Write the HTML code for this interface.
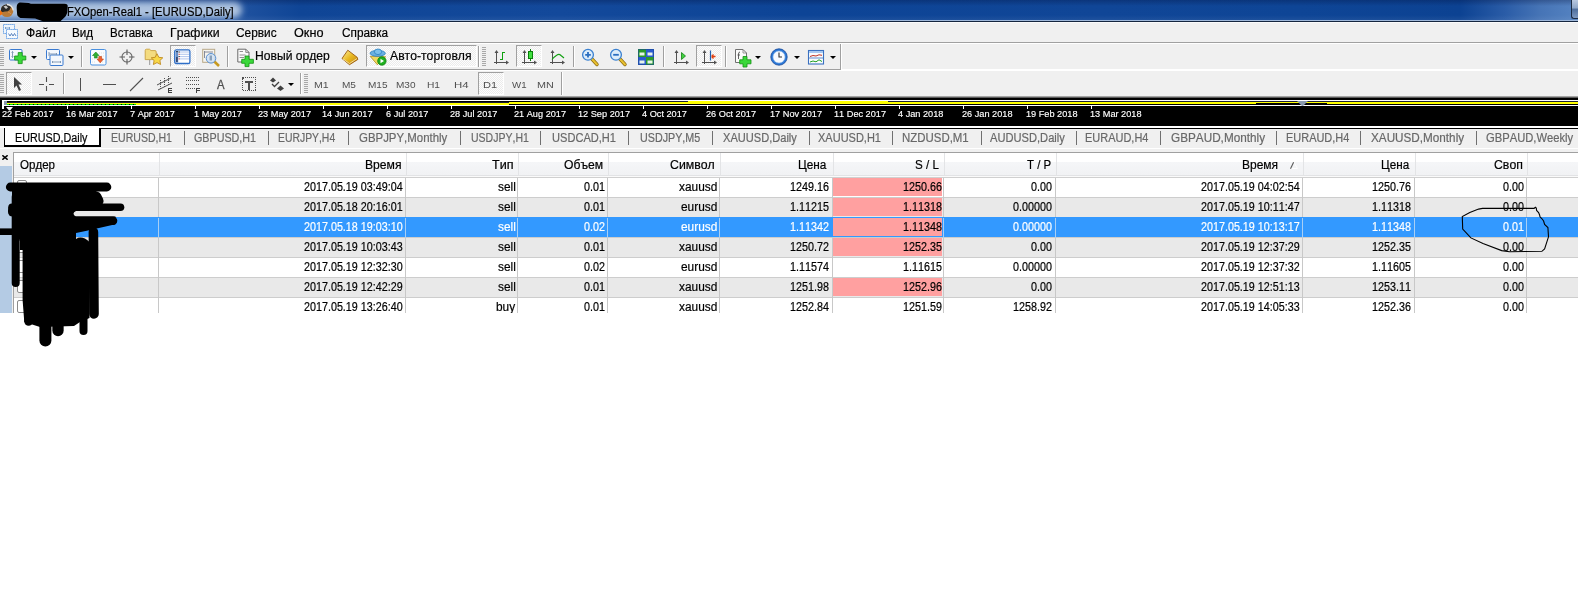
<!DOCTYPE html>
<html><head><meta charset="utf-8">
<style>
html,body{margin:0;padding:0;}
body{width:1578px;height:591px;overflow:hidden;position:relative;background:#fff;font-family:"Liberation Sans",sans-serif;}
body div, body svg{position:absolute;}
.t{white-space:nowrap;line-height:16px;transform-origin:0 0;font-kerning:none;-webkit-text-stroke:0.2px currentColor;}
</style></head><body>

<div style="left:0px;top:0px;width:1578px;height:20px;background:linear-gradient(to right,#3f6aae 0px,#2a5aa5 200px,#0f4596 300px,#13499b 560px,#0d4496 800px,#104697 1100px,#0e4596 1300px,#0c4292 1460px,#2a5ca7 1505px,#4674b6 1540px,#5280bf 1570px);"></div>
<div style="left:0px;top:0px;width:1578px;height:6px;background:linear-gradient(to bottom,rgba(0,10,50,0.28),rgba(0,10,50,0));"></div>
<div style="left:0px;top:15px;width:1578px;height:5px;background:linear-gradient(to bottom,rgba(255,255,255,0),rgba(255,255,255,0.06));"></div>
<div style="left:-10px;top:2px;width:252px;height:16px;background:#aec3df;border-radius:8px;filter:blur(3px);"></div>
<div style="left:0px;top:20px;width:1578px;height:1px;background:#9fb8da;"></div>
<div style="left:0px;top:21px;width:1578px;height:1px;background:#15263f;"></div>
<div style="left:1571px;top:0px;width:7px;height:18px;background:linear-gradient(to bottom,#b8c8e0,#8ea6c8 45%,#4e6e9c 50%,#7c98c0);border-left:1px solid #1c2c44;border-bottom:1px solid #1c2c44;border-bottom-left-radius:3px;"></div>
<svg style="left:0;top:0" width="15" height="20" viewBox="0 0 15 20"><circle cx="7" cy="10.8" r="6.3" fill="#b87a38"/><path d="M1 9 Q2 4.5 7 4.5 Q10 4.6 11 7 L9.5 10 Q7.5 12 5 11.5 Q3 12 1 12 Z" fill="#2a2a2a"/><path d="M3.5 6.5 L6 5.5 L8 7.5 L6 9 Z" fill="#c8c8c8"/><path d="M7 4.5 A6.3 6.3 0 0 1 13.2 10.5" fill="none" stroke="#e8e8e8" stroke-width="1.3"/><path d="M0 10 Q2 11 2.5 13.5 Q2 15 0 15.5 Z" fill="#f07010"/><path d="M8 12 Q10 12.5 11 14" stroke="#d89050" stroke-width="1" fill="none"/></svg>
<svg style="left:0;top:0" width="80" height="23" viewBox="0 0 80 23"><path d="M16.7 8.4 C 16.5 4, 18.5 2.5, 20.5 2.5 L 28.8 2.9 L 30.9 3.8 L 64.4 3.8 C 67 4, 68 5, 67.7 6.5 L 67.3 12.6 C 66.5 15.5, 65.5 16.5, 64.4 17.6 L 60.2 21.5 L 43.5 21.5 L 35.1 18.4 L 20.5 18 C 18 17, 17 15.5, 17.1 13.8 Z" fill="#000"/></svg>
<div class="t" style="left:66.58px;top:4px;font-size:12.5px;color:#000;transform:scaleX(0.8989);">FXOpen-Real1 - [EURUSD,Daily]</div>
<div style="left:0px;top:22px;width:1578px;height:20px;background:#f0f0f0;"></div>
<div style="left:0px;top:22px;width:1578px;height:1px;background:#fbfbfb;"></div>
<div style="left:0px;top:42px;width:1578px;height:1px;background:#a0a0a0;"></div>
<div style="left:0px;top:43px;width:1578px;height:1px;background:#ffffff;"></div>
<svg style="left:3px;top:24px" width="15" height="15" viewBox="0 0 15 15"><rect x="0.5" y="0.5" width="11" height="9" fill="#eef5fc" stroke="#4a8ee0" stroke-dasharray="1.2,0.8"/><rect x="3.5" y="5.5" width="11" height="9" fill="#f6fafe" stroke="#4a8ee0" stroke-dasharray="1.2,0.8"/><path d="M2 4 H7 M3 3 L2 4 L3 5 M6 3 L7 4 L6 5" stroke="#5a8ac0" fill="none" stroke-width="0.7"/><path d="M5.5 9.5 L7 12 L8.5 9.5 L10 12 L11.5 9.5 L13 12" stroke="#3a6ab0" fill="none" stroke-width="0.8"/></svg>
<div class="t" style="left:25.80px;top:25px;font-size:12.5px;color:#000;transform:scaleX(0.9676);">Файл</div>
<div class="t" style="left:72.34px;top:25px;font-size:12.5px;color:#000;transform:scaleX(0.9357);">Вид</div>
<div class="t" style="left:110.06px;top:25px;font-size:12.5px;color:#000;transform:scaleX(0.9205);">Вставка</div>
<div class="t" style="left:169.99px;top:25px;font-size:12.5px;color:#000;transform:scaleX(0.9835);">Графики</div>
<div class="t" style="left:236.40px;top:25px;font-size:12.5px;color:#000;transform:scaleX(0.9489);">Сервис</div>
<div class="t" style="left:294.40px;top:25px;font-size:12.5px;color:#000;transform:scaleX(1.0133);">Окно</div>
<div class="t" style="left:341.70px;top:25px;font-size:12.5px;color:#000;transform:scaleX(0.9434);">Справка</div>
<div style="left:0px;top:44px;width:1578px;height:25px;background:#f0f0f0;"></div>
<div style="left:0px;top:69px;width:841px;height:1px;background:#a0a0a0;"></div>
<div style="left:0px;top:70px;width:841px;height:1px;background:#ffffff;"></div>
<div style="left:0px;top:71px;width:1578px;height:25px;background:#f0f0f0;"></div>
<div style="left:0px;top:96px;width:1578px;height:2px;background:linear-gradient(to bottom,#c8c8c8,#383838);"></div>
<div style="left:0px;top:47px;width:4px;height:1px;background:#a8a8a8;"></div>
<div style="left:0px;top:49px;width:4px;height:1px;background:#a8a8a8;"></div>
<div style="left:0px;top:51px;width:4px;height:1px;background:#a8a8a8;"></div>
<div style="left:0px;top:53px;width:4px;height:1px;background:#a8a8a8;"></div>
<div style="left:0px;top:55px;width:4px;height:1px;background:#a8a8a8;"></div>
<div style="left:0px;top:57px;width:4px;height:1px;background:#a8a8a8;"></div>
<div style="left:0px;top:59px;width:4px;height:1px;background:#a8a8a8;"></div>
<div style="left:0px;top:61px;width:4px;height:1px;background:#a8a8a8;"></div>
<div style="left:0px;top:63px;width:4px;height:1px;background:#a8a8a8;"></div>
<div style="left:0px;top:65px;width:4px;height:1px;background:#a8a8a8;"></div>
<svg style="left:9px;top:48px" width="18" height="17" viewBox="0 0 18 17"><rect x="0.5" y="1.5" width="12.5" height="10.5" rx="1" fill="#f4f8fd" stroke="#3a7ad0"/><path d="M3.5 3.5 V9.5 M2.5 4.5 L3.5 3.5 L4.5 4.5 M2.5 8.5 L3.5 9.5 L4.5 8.5" stroke="#7a94b0" fill="none" stroke-width="0.9"/><path d="M9.2 4.6 H13.2 V8 H16.8 V12 H13.2 V15.6 H9.2 V12 H5.6 V8 H9.2 Z" fill="#3ad83a" stroke="#129012" stroke-width="0.8"/></svg>
<svg style="left:31px;top:56px" width="6" height="4" viewBox="0 0 6 4"><path d="M0 0 H6 L3 3 Z" fill="#000"/></svg>
<svg style="left:46px;top:48px" width="18" height="18" viewBox="0 0 18 18"><rect x="0.5" y="1.5" width="13" height="10" rx="1" fill="#f4f8fd" stroke="#3a7ad0"/><rect x="4" y="7" width="13" height="10.5" rx="1" fill="#f4f8fd" stroke="#3a7ad0"/><path d="M3 4 V8 M3 6 H11 M10 5 L11 6 L10 7 M6 14 H15 M7 13 L6 14 L7 15 M14 13 L15 14 L14 15" stroke="#7a94b0" fill="none" stroke-width="0.9"/></svg>
<svg style="left:68px;top:56px" width="6" height="4" viewBox="0 0 6 4"><path d="M0 0 H6 L3 3 Z" fill="#000"/></svg>
<div style="left:81px;top:46px;width:1px;height:21px;background:#a0a0a0;"></div>
<div style="left:82px;top:46px;width:1px;height:21px;background:#ffffff;"></div>
<svg style="left:90px;top:49px" width="17" height="17" viewBox="0 0 17 17"><rect x="0.5" y="0.5" width="15.5" height="15.5" rx="1.5" fill="#fafcfe" stroke="#4a90e0"/><path d="M9 4 H14 M9 7 H14 M2 10 H6 M2 13 H6 M10 13 H14" stroke="#d0d4d8" stroke-width="0.7" stroke-dasharray="1,1"/><path d="M2.5 6.5 L5.8 3 L9 6.5 H7.2 V9 H4.4 V6.5 Z" fill="#30b030" stroke="#1a801a" stroke-width="0.6"/><path d="M7 10 L10.2 13.8 L13.5 10 H11.6 V7.5 H8.8 V10 Z" fill="#f06030" stroke="#c04010" stroke-width="0.6"/></svg>
<svg style="left:119px;top:49px" width="17" height="17" viewBox="0 0 17 17"><circle cx="8" cy="8" r="5" fill="none" stroke="#6a6a6a" stroke-width="1.1"/><path d="M8 0.5 V6 M8 10 V15.5 M0.5 8 H6 M10 8 H15.5" stroke="#5a5a5a" stroke-width="1.1"/></svg>
<svg style="left:144px;top:48px" width="20" height="18" viewBox="0 0 20 18"><path d="M1.2 2.5 Q1.2 1.2 2.5 1.2 H5.5 L7 2.6 H11 Q12.2 2.6 12.2 3.8 V11.6 H1.2 Z" fill="#f4dc80" stroke="#c8a040" stroke-width="0.9"/><path d="M13 5.7 L14.8 9.3 L18.8 9.8 L15.9 12.5 L16.6 16.5 L13 14.6 L9.4 16.5 L10.1 12.5 L7.2 9.8 L11.2 9.3 Z" fill="#f8d848" stroke="#c08a20" stroke-width="0.9"/><path d="M5.7 12.5 V17" stroke="#404040" stroke-dasharray="1,1"/></svg>
<div style="left:170px;top:45px;width:26px;height:22px;background:conic-gradient(#fdfdfd 25%,#ebebeb 0 50%,#fdfdfd 0 75%,#ebebeb 0) 0 0/2px 2px;border-left:1px solid #a0a0a0;border-top:1px solid #a0a0a0;border-right:1px solid #fff;border-bottom:1px solid #fff;box-sizing:border-box;"></div>
<svg style="left:174px;top:49px" width="17" height="16" viewBox="0 0 17 16"><rect x="0.7" y="0.9" width="15.2" height="13.6" rx="1.6" fill="#fff" stroke="#2f6fc8" stroke-width="1.3"/><rect x="1.6" y="1.8" width="2.6" height="11.8" fill="#6a90c8"/><rect x="2.2" y="8" width="1.4" height="5" fill="#2a3a60"/><path d="M5.5 3 H15 M5.5 5.3 H15 M5.5 7.6 H15 M5.5 9.9 H15" stroke="#a8c0ec" stroke-width="0.9"/><path d="M2.4 2.6 h1.2 M4.6 3 h1.1 M4.6 7.6 h1.1" stroke="#000" stroke-width="1"/><path d="M4.6 5.3 h1.1 M4.6 9.9 h1.1" stroke="#e02020" stroke-width="1"/></svg>
<svg style="left:202px;top:48px" width="19" height="19" viewBox="0 0 19 19"><rect x="0.7" y="1.3" width="12" height="13" fill="#f6f4ee" stroke="#b8a888" stroke-width="1"/><path d="M2.5 3 V10 M2.5 4 H11" stroke="#7a8090" stroke-width="0.9"/><circle cx="9" cy="10.3" r="4.8" fill="#cfe0f4" fill-opacity="0.85" stroke="#5a90d0" stroke-width="1"/><rect x="7.6" y="7.5" width="2.4" height="5" fill="#8aa0b8"/><path d="M12.6 13.8 L17 18" stroke="#c89a20" stroke-width="2.6"/></svg>
<div style="left:227px;top:46px;width:1px;height:21px;background:#a0a0a0;"></div>
<div style="left:228px;top:46px;width:1px;height:21px;background:#ffffff;"></div>
<svg style="left:237px;top:48px" width="18" height="20" viewBox="0 0 18 20"><path d="M0.8 1.2 H8.8 L12 4.4 V14 H0.8 Z" fill="#fafafa" stroke="#6a6a6a" stroke-width="1"/><path d="M8.8 1.2 V4.4 H12" fill="none" stroke="#6a6a6a" stroke-width="0.8"/><path d="M2.6 3.5 H6 M2.6 7 H8.5 M2.6 9.5 H7" stroke="#909090" stroke-width="1"/><path d="M8 8 H12 V11.3 H16.4 V15.3 H12 V18.6 H8 V15.3 H4.7 V11.3 H8 Z" fill="#3ad83a" stroke="#129012" stroke-width="0.8"/></svg>
<div class="t" style="left:255.01px;top:48px;font-size:12.5px;color:#000;transform:scaleX(0.9694);">Новый ордер</div>
<svg style="left:340px;top:48px" width="20" height="19" viewBox="0 0 20 19"><defs><linearGradient id="bk" x1="0" y1="0" x2="1" y2="1"><stop offset="0" stop-color="#fff0a0"/><stop offset="0.5" stop-color="#e8b820"/><stop offset="1" stop-color="#c08010"/></linearGradient></defs><path d="M2 10.5 L7.8 2.2 L17 9.2 L17.9 11.4 L9.5 16.7 Z" fill="url(#bk)" stroke="#9a5a10" stroke-width="0.9" stroke-linejoin="round"/><path d="M3 11 L9.5 15.5 L17 10.5" fill="none" stroke="#f8e8b0" stroke-width="0.8"/></svg>
<div style="left:366px;top:45px;width:111px;height:22px;background:conic-gradient(#fdfdfd 25%,#ebebeb 0 50%,#fdfdfd 0 75%,#ebebeb 0) 0 0/2px 2px;border-left:1px solid #a0a0a0;border-top:1px solid #a0a0a0;border-right:1px solid #fff;border-bottom:1px solid #fff;box-sizing:border-box;"></div>
<svg style="left:369px;top:48px" width="19" height="19" viewBox="0 0 19 19"><path d="M1.2 8.3 L8.3 16.7 L16.7 8.8 Z" fill="#f0d860" stroke="#b08a20" stroke-width="0.8"/><ellipse cx="8.7" cy="5.3" rx="7.6" ry="3" fill="#6ab0e0" stroke="#2a80c0" stroke-width="0.8"/><ellipse cx="9" cy="3.8" rx="3.6" ry="2.8" fill="#7cc0ec" stroke="#2a80c0" stroke-width="0.8"/><circle cx="12.9" cy="13" r="4.2" fill="#20b020" stroke="#0a800a" stroke-width="0.8"/><path d="M11.5 10.7 L15 13 L11.5 15.3 Z" fill="#fff"/></svg>
<div class="t" style="left:389.98px;top:48px;font-size:12.5px;color:#000;transform:scaleX(0.9750);">Авто-торговля</div>
<div style="left:478px;top:46px;width:1px;height:21px;background:#a0a0a0;"></div>
<div style="left:479px;top:46px;width:1px;height:21px;background:#ffffff;"></div>
<div style="left:482px;top:47px;width:4px;height:1px;background:#a8a8a8;"></div>
<div style="left:482px;top:49px;width:4px;height:1px;background:#a8a8a8;"></div>
<div style="left:482px;top:51px;width:4px;height:1px;background:#a8a8a8;"></div>
<div style="left:482px;top:53px;width:4px;height:1px;background:#a8a8a8;"></div>
<div style="left:482px;top:55px;width:4px;height:1px;background:#a8a8a8;"></div>
<div style="left:482px;top:57px;width:4px;height:1px;background:#a8a8a8;"></div>
<div style="left:482px;top:59px;width:4px;height:1px;background:#a8a8a8;"></div>
<div style="left:482px;top:61px;width:4px;height:1px;background:#a8a8a8;"></div>
<div style="left:482px;top:63px;width:4px;height:1px;background:#a8a8a8;"></div>
<div style="left:482px;top:65px;width:4px;height:1px;background:#a8a8a8;"></div>
<svg style="left:493px;top:48px" width="20" height="19" viewBox="0 0 20 19"><path d="M3.5 3 V16 M1 14.5 H15" stroke="#505050" stroke-width="1" fill="none" shape-rendering="crispEdges"/><path d="M1.5 5 L3.5 2 L5.5 5 Z M13 12.5 L16 14.5 L13 16.5 Z" fill="#505050"/><path d="M9.5 4.5 V11.5 M9 4.5 H12 M7 11.5 H10" stroke="#10a010" stroke-width="1.1" fill="none" shape-rendering="crispEdges"/></svg>
<div style="left:516px;top:45px;width:26px;height:22px;background:conic-gradient(#fdfdfd 25%,#ebebeb 0 50%,#fdfdfd 0 75%,#ebebeb 0) 0 0/2px 2px;border-left:1px solid #a0a0a0;border-top:1px solid #a0a0a0;border-right:1px solid #fff;border-bottom:1px solid #fff;box-sizing:border-box;"></div>
<svg style="left:521px;top:48px" width="20" height="19" viewBox="0 0 20 19"><path d="M3.5 3 V16 M1 14.5 H15" stroke="#505050" stroke-width="1" fill="none" shape-rendering="crispEdges"/><path d="M1.5 5 L3.5 2 L5.5 5 Z M13 12.5 L16 14.5 L13 16.5 Z" fill="#505050"/><path d="M9.5 0.5 V13" stroke="#108010" stroke-width="1" shape-rendering="crispEdges"/><rect x="7.5" y="3.5" width="4" height="7" fill="#40e040" stroke="#0a800a" stroke-width="1"/></svg>
<svg style="left:549px;top:48px" width="20" height="19" viewBox="0 0 20 19"><path d="M3.5 3 V16 M1 14.5 H15" stroke="#505050" stroke-width="1" fill="none" shape-rendering="crispEdges"/><path d="M1.5 5 L3.5 2 L5.5 5 Z M13 12.5 L16 14.5 L13 16.5 Z" fill="#505050"/><path d="M3 11.5 Q5 9 8 7 Q10 5.5 12 7.5 L15 10" stroke="#10a010" stroke-width="1.1" fill="none"/></svg>
<div style="left:573px;top:46px;width:1px;height:21px;background:#a0a0a0;"></div>
<div style="left:574px;top:46px;width:1px;height:21px;background:#ffffff;"></div>
<svg style="left:581px;top:48px" width="20" height="19" viewBox="0 0 20 19"><path d="M10.5 10.5 L16 16.5" stroke="#8a6a10" stroke-width="3.4" stroke-linecap="round"/><path d="M10.5 10.5 L16 16.5" stroke="#e8c030" stroke-width="2" stroke-linecap="round"/><circle cx="7" cy="6.8" r="5.4" fill="#dcecfa" stroke="#3a80d0" stroke-width="1.3"/><path d="M4.2 6.8 H9.8 M7 4 V9.6" stroke="#2a6ec0" stroke-width="1.8"/></svg>
<svg style="left:609px;top:48px" width="20" height="19" viewBox="0 0 20 19"><path d="M10.5 10.5 L16 16.5" stroke="#8a6a10" stroke-width="3.4" stroke-linecap="round"/><path d="M10.5 10.5 L16 16.5" stroke="#e8c030" stroke-width="2" stroke-linecap="round"/><circle cx="7" cy="6.8" r="5.4" fill="#dcecfa" stroke="#3a80d0" stroke-width="1.3"/><path d="M4.2 6.8 H9.8" stroke="#2a6ec0" stroke-width="1.8"/></svg>
<svg style="left:638px;top:49px" width="17" height="17" viewBox="0 0 17 17"><rect x="0" y="0" width="8" height="8" fill="#2a9a2a"/><rect x="8" y="0" width="8" height="8" fill="#2a5ad0"/><rect x="0" y="8" width="8" height="8" fill="#2a5ad0"/><rect x="8" y="8" width="8" height="8" fill="#2a9a2a"/><path d="M1.5 3.5 H6.5 V6.5 H1.5 Z M9.5 3.5 H14.5 V6.5 H9.5 Z M1.5 11.5 H6.5 V14.5 H1.5 Z M9.5 11.5 H14.5 V14.5 H9.5 Z" fill="#e8f4e8" stroke="none"/><path d="M0.5 0.5 H15.5 V15.5 H0.5 Z" fill="none" stroke="#1a4a90" stroke-width="0.6"/></svg>
<div style="left:663px;top:46px;width:1px;height:21px;background:#a0a0a0;"></div>
<div style="left:664px;top:46px;width:1px;height:21px;background:#ffffff;"></div>
<svg style="left:672px;top:48px" width="20" height="19" viewBox="0 0 20 19"><path d="M4.5 3 V16 M2 14.5 H16" stroke="#505050" stroke-width="1" fill="none" shape-rendering="crispEdges"/><path d="M2.5 5 L4.5 2 L6.5 5 Z M14 12.5 L17 14.5 L14 16.5 Z" fill="#505050"/><path d="M9.5 4.5 L13.5 8 L9.5 11.5 Z" fill="#40d040" stroke="#108010" stroke-width="0.8"/></svg>
<div style="left:696px;top:45px;width:26px;height:22px;background:conic-gradient(#fdfdfd 25%,#ebebeb 0 50%,#fdfdfd 0 75%,#ebebeb 0) 0 0/2px 2px;border-left:1px solid #a0a0a0;border-top:1px solid #a0a0a0;border-right:1px solid #fff;border-bottom:1px solid #fff;box-sizing:border-box;"></div>
<svg style="left:700px;top:48px" width="20" height="19" viewBox="0 0 20 19"><path d="M4.5 3 V16 M2 14.5 H16" stroke="#505050" stroke-width="1" fill="none" shape-rendering="crispEdges"/><path d="M2.5 5 L4.5 2 L6.5 5 Z M14 12.5 L17 14.5 L14 16.5 Z" fill="#505050"/><path d="M10.5 2.5 V12.5" stroke="#2060b0" stroke-width="1.2"/><path d="M11.5 8.5 H15.5 M11.5 8.5 L13.5 6.5 M11.5 8.5 L13.5 10.5" stroke="#e04010" stroke-width="1.3" fill="none"/></svg>
<div style="left:725px;top:46px;width:1px;height:21px;background:#a0a0a0;"></div>
<div style="left:726px;top:46px;width:1px;height:21px;background:#ffffff;"></div>
<svg style="left:734px;top:48px" width="18" height="20" viewBox="0 0 18 20"><path d="M1.5 1.5 H9 L12.5 5 V14.5 H1.5 Z" fill="#fbfbfb" stroke="#707070" stroke-width="1"/><path d="M9 1.5 V5 H12.5" fill="none" stroke="#808080" stroke-width="0.8"/><path d="M6 4 Q4.5 4 4.5 6 V11 M3.5 7 H6" stroke="#505050" fill="none" stroke-width="0.9"/><path d="M9 8.5 H13 V11.8 H17 V15.8 H13 V19 H9 V15.8 H5.7 V11.8 H9 Z" fill="#3ad83a" stroke="#129012" stroke-width="0.8"/></svg>
<svg style="left:755px;top:56px" width="6" height="4" viewBox="0 0 6 4"><path d="M0 0 H6 L3 3 Z" fill="#000"/></svg>
<svg style="left:770px;top:48px" width="18" height="18" viewBox="0 0 18 18"><circle cx="9" cy="9" r="8.2" fill="#2a78d8" stroke="#1a4a98" stroke-width="0.8"/><circle cx="9" cy="9" r="6" fill="#f8fbff" stroke="#9ac0ea" stroke-width="0.6"/><path d="M9 4.5 V9 H12" stroke="#303030" stroke-width="1.1" fill="none"/></svg>
<svg style="left:794px;top:56px" width="6" height="4" viewBox="0 0 6 4"><path d="M0 0 H6 L3 3 Z" fill="#000"/></svg>
<svg style="left:807px;top:49px" width="18" height="17" viewBox="0 0 18 17"><rect x="1.5" y="1.5" width="15" height="13.5" fill="#fafcfe" stroke="#3a70c0" stroke-width="1.1"/><rect x="2" y="2" width="14" height="2" fill="#a8c8f0"/><path d="M2 9 H16" stroke="#3a70c0" stroke-width="0.8"/><path d="M3 7.5 L6 6.5 L9 7 L12 5.8 L15 6.3" stroke="#c03020" fill="none" stroke-width="1"/><path d="M3 13 L6 12 L9 12.8 L12 10.8 L15 12.5" stroke="#20a020" fill="none" stroke-width="1"/></svg>
<svg style="left:830px;top:56px" width="6" height="4" viewBox="0 0 6 4"><path d="M0 0 H6 L3 3 Z" fill="#000"/></svg>
<div style="left:840px;top:44px;width:1px;height:26px;background:#a0a0a0;"></div>
<div style="left:841px;top:44px;width:1px;height:27px;background:#ffffff;"></div>
<div style="left:0px;top:74px;width:4px;height:1px;background:#a8a8a8;"></div>
<div style="left:0px;top:76px;width:4px;height:1px;background:#a8a8a8;"></div>
<div style="left:0px;top:78px;width:4px;height:1px;background:#a8a8a8;"></div>
<div style="left:0px;top:80px;width:4px;height:1px;background:#a8a8a8;"></div>
<div style="left:0px;top:82px;width:4px;height:1px;background:#a8a8a8;"></div>
<div style="left:0px;top:84px;width:4px;height:1px;background:#a8a8a8;"></div>
<div style="left:0px;top:86px;width:4px;height:1px;background:#a8a8a8;"></div>
<div style="left:0px;top:88px;width:4px;height:1px;background:#a8a8a8;"></div>
<div style="left:0px;top:90px;width:4px;height:1px;background:#a8a8a8;"></div>
<div style="left:0px;top:92px;width:4px;height:1px;background:#a8a8a8;"></div>
<div style="left:6px;top:72px;width:26px;height:23px;background:conic-gradient(#fdfdfd 25%,#ebebeb 0 50%,#fdfdfd 0 75%,#ebebeb 0) 0 0/2px 2px;border-left:1px solid #a0a0a0;border-top:1px solid #a0a0a0;border-right:1px solid #fff;border-bottom:1px solid #fff;box-sizing:border-box;"></div>
<svg style="left:13px;top:77px" width="12" height="15" viewBox="0 0 12 15"><path d="M1 0 V11 L3.5 8.5 L6 14 L8 13 L5.5 7.5 L9 7.5 Z" fill="#404040"/></svg>
<svg style="left:38px;top:76px" width="17" height="16" viewBox="0 0 17 16"><path d="M8.5 1 V6 M8.5 10 V15 M1 8.5 H6 M11 8.5 H16" stroke="#505050" stroke-width="1.1"/></svg>
<div style="left:63px;top:73px;width:1px;height:21px;background:#a0a0a0;"></div>
<div style="left:64px;top:73px;width:1px;height:21px;background:#ffffff;"></div>
<div style="left:80px;top:78px;width:1px;height:13px;background:#505050;"></div>
<div style="left:103px;top:84px;width:13px;height:1px;background:#505050;"></div>
<svg style="left:129px;top:77px" width="15" height="15" viewBox="0 0 15 15"><path d="M1 14 L14 1" stroke="#505050" stroke-width="1.1"/></svg>
<svg style="left:156px;top:75px" width="18" height="19" viewBox="0 0 18 19" shape-rendering="crispEdges"><path d="M1 10 L15 3 M2 15 L16 8" stroke="#505050" stroke-width="1" fill="none" shape-rendering="auto"/><path d="M4.5 5 V14 M8.5 3 V12 M12.5 1 V10" stroke="#505050" stroke-width="1" stroke-dasharray="1,1"/><path d="M12 13 H16 V14 H13 V15 H15.5 V16 H13 V17 H16 V18 H12 Z" fill="#404040"/></svg>
<svg style="left:186px;top:76px" width="16" height="18" viewBox="0 0 16 18" shape-rendering="crispEdges"><path d="M0 1.5 H14 M0 4.5 H14 M0 8.5 H14 M0 12.5 H9" stroke="#505050" stroke-dasharray="1,1"/><path d="M10 12 H14 V13 H11 V14 H13.5 V15 H11 V17 H10 Z" fill="#404040"/></svg>
<div class="t" style="left:216.98px;top:77px;font-size:12.5px;color:#505050;transform:scaleX(0.9049);-webkit-text-stroke:0.3px #505050;">A</div>
<svg style="left:242px;top:77px" width="15" height="15" viewBox="0 0 15 15" shape-rendering="crispEdges"><rect x="0.5" y="0.5" width="13" height="13" fill="none" stroke="#505050" stroke-dasharray="1,1"/><rect x="0" y="0" width="2" height="2" fill="#505050"/><path d="M2.5 4.5 H11 M6.5 4 V13" stroke="#505050" stroke-width="2"/></svg>
<svg style="left:270px;top:77px" width="16" height="15" viewBox="0 0 16 15"><path d="M3 0.5 L6 3.5 L3 5.5 L0 3.5 Z" fill="#404040"/><path d="M2 7 L4.5 9.5 L9 5" stroke="#404040" stroke-width="1.3" fill="none"/><path d="M10.5 8.5 L14 11.5 L10.5 14 L7 11.5 Z" fill="#404040"/></svg>
<svg style="left:288px;top:83px" width="6" height="4" viewBox="0 0 6 4"><path d="M0 0 H6 L3 3 Z" fill="#000"/></svg>
<div style="left:300px;top:73px;width:1px;height:21px;background:#a0a0a0;"></div>
<div style="left:301px;top:73px;width:1px;height:21px;background:#ffffff;"></div>
<div style="left:304px;top:74px;width:4px;height:1px;background:#a8a8a8;"></div>
<div style="left:304px;top:76px;width:4px;height:1px;background:#a8a8a8;"></div>
<div style="left:304px;top:78px;width:4px;height:1px;background:#a8a8a8;"></div>
<div style="left:304px;top:80px;width:4px;height:1px;background:#a8a8a8;"></div>
<div style="left:304px;top:82px;width:4px;height:1px;background:#a8a8a8;"></div>
<div style="left:304px;top:84px;width:4px;height:1px;background:#a8a8a8;"></div>
<div style="left:304px;top:86px;width:4px;height:1px;background:#a8a8a8;"></div>
<div style="left:304px;top:88px;width:4px;height:1px;background:#a8a8a8;"></div>
<div style="left:304px;top:90px;width:4px;height:1px;background:#a8a8a8;"></div>
<div style="left:304px;top:92px;width:4px;height:1px;background:#a8a8a8;"></div>
<div style="left:478px;top:72px;width:26px;height:23px;background:conic-gradient(#fdfdfd 25%,#ebebeb 0 50%,#fdfdfd 0 75%,#ebebeb 0) 0 0/2px 2px;border-left:1px solid #a0a0a0;border-top:1px solid #a0a0a0;border-right:1px solid #fff;border-bottom:1px solid #fff;box-sizing:border-box;"></div>
<div class="t" style="left:314.13px;top:77px;font-size:9.5px;color:#505050;transform:scaleX(1.1126);-webkit-text-stroke:0;">M1</div>
<div class="t" style="left:342.48px;top:77px;font-size:9.5px;color:#505050;transform:scaleX(1.0567);-webkit-text-stroke:0;">M5</div>
<div class="t" style="left:368.18px;top:77px;font-size:9.5px;color:#505050;transform:scaleX(1.0577);-webkit-text-stroke:0;">M15</div>
<div class="t" style="left:395.88px;top:77px;font-size:9.5px;color:#505050;transform:scaleX(1.0560);-webkit-text-stroke:0;">M30</div>
<div class="t" style="left:427.46px;top:77px;font-size:9.5px;color:#505050;transform:scaleX(1.0733);-webkit-text-stroke:0;">H1</div>
<div class="t" style="left:454.07px;top:77px;font-size:9.5px;color:#505050;transform:scaleX(1.1997);-webkit-text-stroke:0;">H4</div>
<div class="t" style="left:483.09px;top:77px;font-size:9.5px;color:#505050;transform:scaleX(1.1650);-webkit-text-stroke:0;">D1</div>
<div class="t" style="left:511.96px;top:77px;font-size:9.5px;color:#505050;transform:scaleX(1.0186);-webkit-text-stroke:0;">W1</div>
<div class="t" style="left:537.12px;top:77px;font-size:9.5px;color:#505050;transform:scaleX(1.1346);-webkit-text-stroke:0;">MN</div>
<div style="left:561px;top:72px;width:1px;height:23px;background:#a0a0a0;"></div>
<div style="left:562px;top:72px;width:1px;height:23px;background:#ffffff;"></div>
<div style="left:0px;top:98px;width:1578px;height:28px;background:#000;"></div>
<div style="left:2px;top:100px;width:1576px;height:1px;background:#fff;"></div>
<div style="left:2px;top:105px;width:1576px;height:1px;background:#fff;"></div>
<div style="left:2px;top:100px;width:2px;height:9px;background:#fff;"></div>
<div style="left:4px;top:101px;width:3px;height:4px;background:#8899aa;"></div>
<div style="left:7px;top:102px;width:502px;height:1px;background:#1e2038;"></div>
<div style="left:7px;top:103px;width:502px;height:2px;background:#ffff00;"></div>
<div style="left:7px;top:104px;width:129px;height:1px;background:#00e000;"></div>
<div style="left:9px;top:104px;width:127px;height:1px;background:repeating-linear-gradient(to right,#000 0 1px,transparent 1px 4px);"></div>
<div style="left:530px;top:101px;width:1048px;height:1px;background:#1e2038;"></div>
<div style="left:509px;top:102px;width:1069px;height:2px;background:#ffff00;"></div>
<div style="left:688px;top:101px;width:200px;height:1px;background:#ffff00;"></div>
<div style="left:1256px;top:103px;width:71px;height:1px;background:#000;"></div>
<svg style="left:1297px;top:101px" width="11" height="6" viewBox="0 0 11 6"><path d="M0 0 H11 L6 5 H5 Z" fill="#8a9ab0"/></svg>
<svg style="left:6px;top:107px" width="7" height="4" viewBox="0 0 7 4"><path d="M0 0 H7 L4 3.5 H3 Z" fill="#fff"/></svg>
<div class="t" style="left:2.24px;top:106px;font-size:9.5px;color:#fff;transform:scaleX(0.9658);-webkit-text-stroke:0.15px #fff;">22 Feb 2017</div>
<div style="left:67px;top:106px;width:1px;height:3px;background:#fff;"></div>
<div class="t" style="left:66.00px;top:106px;font-size:9.5px;color:#fff;transform:scaleX(0.9658);-webkit-text-stroke:0.15px #fff;">16 Mar 2017</div>
<div style="left:131px;top:106px;width:1px;height:3px;background:#fff;"></div>
<div class="t" style="left:130.23px;top:106px;font-size:9.5px;color:#fff;transform:scaleX(0.9658);-webkit-text-stroke:0.15px #fff;">7 Apr 2017</div>
<div style="left:195px;top:106px;width:1px;height:3px;background:#fff;"></div>
<div class="t" style="left:194.00px;top:106px;font-size:9.5px;color:#fff;transform:scaleX(0.9658);-webkit-text-stroke:0.15px #fff;">1 May 2017</div>
<div style="left:259px;top:106px;width:1px;height:3px;background:#fff;"></div>
<div class="t" style="left:258.24px;top:106px;font-size:9.5px;color:#fff;transform:scaleX(0.9658);-webkit-text-stroke:0.15px #fff;">23 May 2017</div>
<div style="left:323px;top:106px;width:1px;height:3px;background:#fff;"></div>
<div class="t" style="left:322.00px;top:106px;font-size:9.5px;color:#fff;transform:scaleX(0.9658);-webkit-text-stroke:0.15px #fff;">14 Jun 2017</div>
<div style="left:387px;top:106px;width:1px;height:3px;background:#fff;"></div>
<div class="t" style="left:386.23px;top:106px;font-size:9.5px;color:#fff;transform:scaleX(0.9658);-webkit-text-stroke:0.15px #fff;">6 Jul 2017</div>
<div style="left:451px;top:106px;width:1px;height:3px;background:#fff;"></div>
<div class="t" style="left:450.24px;top:106px;font-size:9.5px;color:#fff;transform:scaleX(0.9658);-webkit-text-stroke:0.15px #fff;">28 Jul 2017</div>
<div style="left:515px;top:106px;width:1px;height:3px;background:#fff;"></div>
<div class="t" style="left:514.24px;top:106px;font-size:9.5px;color:#fff;transform:scaleX(0.9658);-webkit-text-stroke:0.15px #fff;">21 Aug 2017</div>
<div style="left:579px;top:106px;width:1px;height:3px;background:#fff;"></div>
<div class="t" style="left:578.00px;top:106px;font-size:9.5px;color:#fff;transform:scaleX(0.9658);-webkit-text-stroke:0.15px #fff;">12 Sep 2017</div>
<div style="left:643px;top:106px;width:1px;height:3px;background:#fff;"></div>
<div class="t" style="left:642.49px;top:106px;font-size:9.5px;color:#fff;transform:scaleX(0.9658);-webkit-text-stroke:0.15px #fff;">4 Oct 2017</div>
<div style="left:707px;top:106px;width:1px;height:3px;background:#fff;"></div>
<div class="t" style="left:706.24px;top:106px;font-size:9.5px;color:#fff;transform:scaleX(0.9658);-webkit-text-stroke:0.15px #fff;">26 Oct 2017</div>
<div style="left:771px;top:106px;width:1px;height:3px;background:#fff;"></div>
<div class="t" style="left:770.00px;top:106px;font-size:9.5px;color:#fff;transform:scaleX(0.9658);-webkit-text-stroke:0.15px #fff;">17 Nov 2017</div>
<div style="left:835px;top:106px;width:1px;height:3px;background:#fff;"></div>
<div class="t" style="left:834.00px;top:106px;font-size:9.5px;color:#fff;transform:scaleX(0.9658);-webkit-text-stroke:0.15px #fff;">11 Dec 2017</div>
<div style="left:899px;top:106px;width:1px;height:3px;background:#fff;"></div>
<div class="t" style="left:898.49px;top:106px;font-size:9.5px;color:#fff;transform:scaleX(0.9658);-webkit-text-stroke:0.15px #fff;">4 Jan 2018</div>
<div style="left:963px;top:106px;width:1px;height:3px;background:#fff;"></div>
<div class="t" style="left:962.24px;top:106px;font-size:9.5px;color:#fff;transform:scaleX(0.9658);-webkit-text-stroke:0.15px #fff;">26 Jan 2018</div>
<div style="left:1027px;top:106px;width:1px;height:3px;background:#fff;"></div>
<div class="t" style="left:1026.00px;top:106px;font-size:9.5px;color:#fff;transform:scaleX(0.9658);-webkit-text-stroke:0.15px #fff;">19 Feb 2018</div>
<div style="left:1091px;top:106px;width:1px;height:3px;background:#fff;"></div>
<div class="t" style="left:1090.00px;top:106px;font-size:9.5px;color:#fff;transform:scaleX(0.9658);-webkit-text-stroke:0.15px #fff;">13 Mar 2018</div>
<div style="left:0px;top:126px;width:1578px;height:22px;background:#f0f0f0;"></div>
<div style="left:0px;top:126px;width:1578px;height:2px;background:#fff;"></div>
<div style="left:4px;top:128px;width:1574px;height:1px;background:#000;"></div>
<div style="left:0px;top:148px;width:1578px;height:1px;background:#fff;"></div>
<div style="left:4px;top:128px;width:97px;height:19px;background:#fff;border-left:1px solid #000;border-right:2px solid #000;border-bottom:2px solid #000;box-sizing:border-box;"></div>
<div class="t" style="left:15.42px;top:130px;font-size:12.5px;color:#000;transform:scaleX(0.8616);">EURUSD,Daily</div>
<div class="t" style="left:110.53px;top:130px;font-size:12.5px;color:#686868;transform:scaleX(0.8442);">EURUSD,H1</div>
<div class="t" style="left:194.46px;top:130px;font-size:12.5px;color:#686868;transform:scaleX(0.8591);">GBPUSD,H1</div>
<div class="t" style="left:278.15px;top:130px;font-size:12.5px;color:#686868;transform:scaleX(0.8311);">EURJPY,H4</div>
<div class="t" style="left:359.43px;top:130px;font-size:12.5px;color:#686868;transform:scaleX(0.9144);">GBPJPY,Monthly</div>
<div class="t" style="left:470.59px;top:130px;font-size:12.5px;color:#686868;transform:scaleX(0.8409);">USDJPY,H1</div>
<div class="t" style="left:551.65px;top:130px;font-size:12.5px;color:#686868;transform:scaleX(0.8859);">USDCAD,H1</div>
<div class="t" style="left:639.67px;top:130px;font-size:12.5px;color:#686868;transform:scaleX(0.8592);">USDJPY,M5</div>
<div class="t" style="left:722.75px;top:130px;font-size:12.5px;color:#686868;transform:scaleX(0.8863);">XAUUSD,Daily</div>
<div class="t" style="left:817.85px;top:130px;font-size:12.5px;color:#686868;transform:scaleX(0.8803);">XAUUSD,H1</div>
<div class="t" style="left:902.06px;top:130px;font-size:12.5px;color:#686868;transform:scaleX(0.9147);">NZDUSD,M1</div>
<div class="t" style="left:989.98px;top:130px;font-size:12.5px;color:#686868;transform:scaleX(0.8906);">AUDUSD,Daily</div>
<div class="t" style="left:1085.10px;top:130px;font-size:12.5px;color:#686868;transform:scaleX(0.8780);">EURAUD,H4</div>
<div class="t" style="left:1170.81px;top:130px;font-size:12.5px;color:#686868;transform:scaleX(0.9399);">GBPAUD,Monthly</div>
<div class="t" style="left:1285.50px;top:130px;font-size:12.5px;color:#686868;transform:scaleX(0.8766);">EURAUD,H4</div>
<div class="t" style="left:1370.74px;top:130px;font-size:12.5px;color:#686868;transform:scaleX(0.9371);">XAUUSD,Monthly</div>
<div class="t" style="left:1485.74px;top:130px;font-size:12.5px;color:#686868;transform:scaleX(0.8966);">GBPAUD,Weekly</div>
<div style="left:184px;top:131px;width:1px;height:14px;background:#707070;"></div>
<div style="left:268px;top:131px;width:1px;height:14px;background:#707070;"></div>
<div style="left:348px;top:131px;width:1px;height:14px;background:#707070;"></div>
<div style="left:460px;top:131px;width:1px;height:14px;background:#707070;"></div>
<div style="left:540px;top:131px;width:1px;height:14px;background:#707070;"></div>
<div style="left:628px;top:131px;width:1px;height:14px;background:#707070;"></div>
<div style="left:712px;top:131px;width:1px;height:14px;background:#707070;"></div>
<div style="left:809px;top:131px;width:1px;height:14px;background:#707070;"></div>
<div style="left:892px;top:131px;width:1px;height:14px;background:#707070;"></div>
<div style="left:981px;top:131px;width:1px;height:14px;background:#707070;"></div>
<div style="left:1076px;top:131px;width:1px;height:14px;background:#707070;"></div>
<div style="left:1160px;top:131px;width:1px;height:14px;background:#707070;"></div>
<div style="left:1276px;top:131px;width:1px;height:14px;background:#707070;"></div>
<div style="left:1360px;top:131px;width:1px;height:14px;background:#707070;"></div>
<div style="left:1476px;top:131px;width:1px;height:14px;background:#707070;"></div>
<div style="left:0px;top:149px;width:1578px;height:164px;background:#f0f0f0;"></div>
<div style="left:0px;top:166px;width:12px;height:147px;background:#b4cbe4;"></div>
<svg style="left:2px;top:155px" width="6" height="5" viewBox="0 0 6 5"><path d="M0.3 0.3 L5.7 4.7 M5.7 0.3 L0.3 4.7" stroke="#000" stroke-width="1.5"/></svg>
<div style="left:13px;top:152px;width:1565px;height:161px;background:#fff;"></div>
<div style="left:13px;top:152px;width:1565px;height:1px;background:#a0a0a0;"></div>
<div style="left:13px;top:152px;width:1px;height:161px;background:#a0a0a0;"></div>
<div style="left:14px;top:153px;width:1564px;height:9px;background:#ffffff;"></div>
<div style="left:14px;top:162px;width:1564px;height:13px;background:linear-gradient(to bottom,#f5f6f8,#f1f2f4);"></div>
<div style="left:14px;top:175px;width:1564px;height:1px;background:#e2e3e5;"></div>
<div style="left:14px;top:176px;width:1564px;height:1px;background:#fafafa;"></div>
<div style="left:14px;top:177px;width:1564px;height:1px;background:#d0d0d0;"></div>
<div style="left:159px;top:153px;width:1px;height:22px;background:#e3e4e6;"></div>
<div style="left:406px;top:153px;width:1px;height:22px;background:#e3e4e6;"></div>
<div style="left:518px;top:153px;width:1px;height:22px;background:#e3e4e6;"></div>
<div style="left:608px;top:153px;width:1px;height:22px;background:#e3e4e6;"></div>
<div style="left:720px;top:153px;width:1px;height:22px;background:#e3e4e6;"></div>
<div style="left:833px;top:153px;width:1px;height:22px;background:#e3e4e6;"></div>
<div style="left:944px;top:153px;width:1px;height:22px;background:#e3e4e6;"></div>
<div style="left:1056px;top:153px;width:1px;height:22px;background:#e3e4e6;"></div>
<div style="left:1303px;top:153px;width:1px;height:22px;background:#e3e4e6;"></div>
<div style="left:1415px;top:153px;width:1px;height:22px;background:#e3e4e6;"></div>
<div style="left:1527px;top:153px;width:1px;height:22px;background:#e3e4e6;"></div>
<div class="t" style="left:20.05px;top:157px;font-size:12.5px;color:#000;transform:scaleX(0.9250);">Ордер</div>
<div class="t" style="left:365.00px;top:157px;font-size:12.5px;color:#000;transform:scaleX(0.9717);">Время</div>
<div class="t" style="left:492.02px;top:157px;font-size:12.5px;color:#000;transform:scaleX(1.0079);">Тип</div>
<div class="t" style="left:564.42px;top:157px;font-size:12.5px;color:#000;transform:scaleX(0.9720);">Объем</div>
<div class="t" style="left:670.38px;top:157px;font-size:12.5px;color:#000;transform:scaleX(0.9844);">Символ</div>
<div class="t" style="left:798.33px;top:157px;font-size:12.5px;color:#000;transform:scaleX(0.9439);">Цена</div>
<div class="t" style="left:915.17px;top:157px;font-size:12.5px;color:#000;transform:scaleX(0.9302);">S / L</div>
<div class="t" style="left:1026.94px;top:157px;font-size:12.5px;color:#000;transform:scaleX(0.9155);">T / P</div>
<div class="t" style="left:1242.22px;top:157px;font-size:12.5px;color:#000;transform:scaleX(0.9605);">Время</div>
<div class="t" style="left:1381.44px;top:157px;font-size:12.5px;color:#000;transform:scaleX(0.9370);">Цена</div>
<div class="t" style="left:1493.58px;top:157px;font-size:12.5px;color:#000;transform:scaleX(0.9825);">Своп</div>
<svg style="left:1289px;top:161px" width="10" height="9" viewBox="0 0 10 9"><path d="M4.8 1 L8.5 7.5 H1.5" fill="none" stroke="#ffffff" stroke-width="1"/><path d="M1.5 7.8 L4.6 1.2" fill="none" stroke="#5a5a5a" stroke-width="1.1"/></svg>
<div style="left:14px;top:178px;width:1564px;height:19px;background:#ffffff;"></div>
<div style="left:14px;top:197px;width:1564px;height:1px;background:#cdcdcd;"></div>
<div style="left:158px;top:178px;width:1px;height:20px;background:#c8c8c8;"></div>
<div style="left:405px;top:178px;width:1px;height:20px;background:#c8c8c8;"></div>
<div style="left:517px;top:178px;width:1px;height:20px;background:#c8c8c8;"></div>
<div style="left:607px;top:178px;width:1px;height:20px;background:#c8c8c8;"></div>
<div style="left:719px;top:178px;width:1px;height:20px;background:#c8c8c8;"></div>
<div style="left:832px;top:178px;width:1px;height:20px;background:#c8c8c8;"></div>
<div style="left:943px;top:178px;width:1px;height:20px;background:#c8c8c8;"></div>
<div style="left:1055px;top:178px;width:1px;height:20px;background:#c8c8c8;"></div>
<div style="left:1302px;top:178px;width:1px;height:20px;background:#c8c8c8;"></div>
<div style="left:1414px;top:178px;width:1px;height:20px;background:#c8c8c8;"></div>
<div style="left:1526px;top:178px;width:1px;height:20px;background:#c8c8c8;"></div>
<div style="left:833px;top:178px;width:109px;height:18px;background:#ffa0a0;"></div>
<div class="t" style="left:303.66px;top:179px;font-size:12.5px;color:#000;transform:scaleX(0.8602);">2017.05.19 03:49:04</div>
<div class="t" style="left:497.97px;top:179px;font-size:12.5px;color:#000;transform:scaleX(0.9503);">sell</div>
<div class="t" style="left:583.60px;top:179px;font-size:12.5px;color:#000;transform:scaleX(0.8602);">0.01</div>
<div class="t" style="left:679.16px;top:179px;font-size:12.5px;color:#000;transform:scaleX(0.9503);">xauusd</div>
<div class="t" style="left:789.91px;top:179px;font-size:12.5px;color:#000;transform:scaleX(0.8602);">1249.16</div>
<div class="t" style="left:902.61px;top:179px;font-size:12.5px;color:#000;transform:scaleX(0.8602);">1250.66</div>
<div class="t" style="left:1030.99px;top:179px;font-size:12.5px;color:#000;transform:scaleX(0.8602);">0.00</div>
<div class="t" style="left:1200.66px;top:179px;font-size:12.5px;color:#000;transform:scaleX(0.8602);">2017.05.19 04:02:54</div>
<div class="t" style="left:1372.41px;top:179px;font-size:12.5px;color:#000;transform:scaleX(0.8602);">1250.76</div>
<div class="t" style="left:1502.69px;top:179px;font-size:12.5px;color:#000;transform:scaleX(0.8602);">0.00</div>
<div style="left:17px;top:180px;width:10px;height:13px;background:#fff;border:1px solid #8a8a8a;box-sizing:border-box;border-radius:2px;"></div>
<div style="left:14px;top:198px;width:1564px;height:19px;background:#e9e9e9;"></div>
<div style="left:14px;top:217px;width:1564px;height:1px;background:#cdcdcd;"></div>
<div style="left:158px;top:198px;width:1px;height:20px;background:#c8c8c8;"></div>
<div style="left:405px;top:198px;width:1px;height:20px;background:#c8c8c8;"></div>
<div style="left:517px;top:198px;width:1px;height:20px;background:#c8c8c8;"></div>
<div style="left:607px;top:198px;width:1px;height:20px;background:#c8c8c8;"></div>
<div style="left:719px;top:198px;width:1px;height:20px;background:#c8c8c8;"></div>
<div style="left:832px;top:198px;width:1px;height:20px;background:#c8c8c8;"></div>
<div style="left:943px;top:198px;width:1px;height:20px;background:#c8c8c8;"></div>
<div style="left:1055px;top:198px;width:1px;height:20px;background:#c8c8c8;"></div>
<div style="left:1302px;top:198px;width:1px;height:20px;background:#c8c8c8;"></div>
<div style="left:1414px;top:198px;width:1px;height:20px;background:#c8c8c8;"></div>
<div style="left:1526px;top:198px;width:1px;height:20px;background:#c8c8c8;"></div>
<div style="left:833px;top:198px;width:109px;height:18px;background:#ffa0a0;"></div>
<div class="t" style="left:303.87px;top:199px;font-size:12.5px;color:#000;transform:scaleX(0.8602);">2017.05.18 20:16:01</div>
<div class="t" style="left:497.97px;top:199px;font-size:12.5px;color:#000;transform:scaleX(0.9503);">sell</div>
<div class="t" style="left:583.60px;top:199px;font-size:12.5px;color:#000;transform:scaleX(0.8602);">0.01</div>
<div class="t" style="left:681.15px;top:199px;font-size:12.5px;color:#000;transform:scaleX(0.9503);">eurusd</div>
<div class="t" style="left:789.88px;top:199px;font-size:12.5px;color:#000;transform:scaleX(0.8602);">1.11215</div>
<div class="t" style="left:902.60px;top:199px;font-size:12.5px;color:#000;transform:scaleX(0.8602);">1.11318</div>
<div class="t" style="left:1013.05px;top:199px;font-size:12.5px;color:#000;transform:scaleX(0.8602);">0.00000</div>
<div class="t" style="left:1200.88px;top:199px;font-size:12.5px;color:#000;transform:scaleX(0.8602);">2017.05.19 10:11:47</div>
<div class="t" style="left:1372.40px;top:199px;font-size:12.5px;color:#000;transform:scaleX(0.8602);">1.11318</div>
<div class="t" style="left:1502.69px;top:199px;font-size:12.5px;color:#000;transform:scaleX(0.8602);">0.00</div>
<div style="left:17px;top:200px;width:10px;height:13px;background:#fff;border:1px solid #8a8a8a;box-sizing:border-box;border-radius:2px;"></div>
<div style="left:14px;top:217px;width:1564px;height:20px;background:#3399ff;"></div>
<div style="left:14px;top:237px;width:1564px;height:1px;background:#cdcdcd;"></div>
<div style="left:158px;top:218px;width:1px;height:20px;background:#a8cff5;"></div>
<div style="left:405px;top:218px;width:1px;height:20px;background:#a8cff5;"></div>
<div style="left:517px;top:218px;width:1px;height:20px;background:#a8cff5;"></div>
<div style="left:607px;top:218px;width:1px;height:20px;background:#a8cff5;"></div>
<div style="left:719px;top:218px;width:1px;height:20px;background:#a8cff5;"></div>
<div style="left:832px;top:218px;width:1px;height:20px;background:#a8cff5;"></div>
<div style="left:943px;top:218px;width:1px;height:20px;background:#a8cff5;"></div>
<div style="left:1055px;top:218px;width:1px;height:20px;background:#a8cff5;"></div>
<div style="left:1302px;top:218px;width:1px;height:20px;background:#a8cff5;"></div>
<div style="left:1414px;top:218px;width:1px;height:20px;background:#a8cff5;"></div>
<div style="left:1526px;top:218px;width:1px;height:20px;background:#a8cff5;"></div>
<div style="left:833px;top:218px;width:109px;height:18px;background:#ffa0a0;"></div>
<div style="left:832px;top:218px;width:1px;height:19px;background:#3399ff;"></div>
<div class="t" style="left:303.76px;top:219px;font-size:12.5px;color:#fff;transform:scaleX(0.8602);">2017.05.18 19:03:10</div>
<div class="t" style="left:497.97px;top:219px;font-size:12.5px;color:#fff;transform:scaleX(0.9503);">sell</div>
<div class="t" style="left:583.61px;top:219px;font-size:12.5px;color:#fff;transform:scaleX(0.8602);">0.02</div>
<div class="t" style="left:681.15px;top:219px;font-size:12.5px;color:#fff;transform:scaleX(0.9503);">eurusd</div>
<div class="t" style="left:789.97px;top:219px;font-size:12.5px;color:#fff;transform:scaleX(0.8602);">1.11342</div>
<div class="t" style="left:902.60px;top:219px;font-size:12.5px;color:#000;transform:scaleX(0.8602);">1.11348</div>
<div class="t" style="left:1013.05px;top:219px;font-size:12.5px;color:#fff;transform:scaleX(0.8602);">0.00000</div>
<div class="t" style="left:1200.88px;top:219px;font-size:12.5px;color:#fff;transform:scaleX(0.8602);">2017.05.19 10:13:17</div>
<div class="t" style="left:1372.40px;top:219px;font-size:12.5px;color:#fff;transform:scaleX(0.8602);">1.11348</div>
<div class="t" style="left:1502.80px;top:219px;font-size:12.5px;color:#fff;transform:scaleX(0.8602);">0.01</div>
<div style="left:17px;top:220px;width:10px;height:13px;background:#fff;border:1px solid #8a8a8a;box-sizing:border-box;border-radius:2px;"></div>
<div style="left:14px;top:238px;width:1564px;height:19px;background:#e9e9e9;"></div>
<div style="left:14px;top:257px;width:1564px;height:1px;background:#cdcdcd;"></div>
<div style="left:158px;top:238px;width:1px;height:20px;background:#c8c8c8;"></div>
<div style="left:405px;top:238px;width:1px;height:20px;background:#c8c8c8;"></div>
<div style="left:517px;top:238px;width:1px;height:20px;background:#c8c8c8;"></div>
<div style="left:607px;top:238px;width:1px;height:20px;background:#c8c8c8;"></div>
<div style="left:719px;top:238px;width:1px;height:20px;background:#c8c8c8;"></div>
<div style="left:832px;top:238px;width:1px;height:20px;background:#c8c8c8;"></div>
<div style="left:943px;top:238px;width:1px;height:20px;background:#c8c8c8;"></div>
<div style="left:1055px;top:238px;width:1px;height:20px;background:#c8c8c8;"></div>
<div style="left:1302px;top:238px;width:1px;height:20px;background:#c8c8c8;"></div>
<div style="left:1414px;top:238px;width:1px;height:20px;background:#c8c8c8;"></div>
<div style="left:1526px;top:238px;width:1px;height:20px;background:#c8c8c8;"></div>
<div style="left:833px;top:238px;width:109px;height:18px;background:#ffa0a0;"></div>
<div class="t" style="left:303.82px;top:239px;font-size:12.5px;color:#000;transform:scaleX(0.8602);">2017.05.19 10:03:43</div>
<div class="t" style="left:497.97px;top:239px;font-size:12.5px;color:#000;transform:scaleX(0.9503);">sell</div>
<div class="t" style="left:583.60px;top:239px;font-size:12.5px;color:#000;transform:scaleX(0.8602);">0.01</div>
<div class="t" style="left:679.16px;top:239px;font-size:12.5px;color:#000;transform:scaleX(0.9503);">xauusd</div>
<div class="t" style="left:789.97px;top:239px;font-size:12.5px;color:#000;transform:scaleX(0.8602);">1250.72</div>
<div class="t" style="left:902.58px;top:239px;font-size:12.5px;color:#000;transform:scaleX(0.8602);">1252.35</div>
<div class="t" style="left:1030.99px;top:239px;font-size:12.5px;color:#000;transform:scaleX(0.8602);">0.00</div>
<div class="t" style="left:1200.85px;top:239px;font-size:12.5px;color:#000;transform:scaleX(0.8602);">2017.05.19 12:37:29</div>
<div class="t" style="left:1372.38px;top:239px;font-size:12.5px;color:#000;transform:scaleX(0.8602);">1252.35</div>
<div class="t" style="left:1502.69px;top:239px;font-size:12.5px;color:#000;transform:scaleX(0.8602);">0.00</div>
<div style="left:17px;top:240px;width:10px;height:13px;background:#fff;border:1px solid #8a8a8a;box-sizing:border-box;border-radius:2px;"></div>
<div style="left:14px;top:258px;width:1564px;height:19px;background:#ffffff;"></div>
<div style="left:14px;top:277px;width:1564px;height:1px;background:#cdcdcd;"></div>
<div style="left:158px;top:258px;width:1px;height:20px;background:#c8c8c8;"></div>
<div style="left:405px;top:258px;width:1px;height:20px;background:#c8c8c8;"></div>
<div style="left:517px;top:258px;width:1px;height:20px;background:#c8c8c8;"></div>
<div style="left:607px;top:258px;width:1px;height:20px;background:#c8c8c8;"></div>
<div style="left:719px;top:258px;width:1px;height:20px;background:#c8c8c8;"></div>
<div style="left:832px;top:258px;width:1px;height:20px;background:#c8c8c8;"></div>
<div style="left:943px;top:258px;width:1px;height:20px;background:#c8c8c8;"></div>
<div style="left:1055px;top:258px;width:1px;height:20px;background:#c8c8c8;"></div>
<div style="left:1302px;top:258px;width:1px;height:20px;background:#c8c8c8;"></div>
<div style="left:1414px;top:258px;width:1px;height:20px;background:#c8c8c8;"></div>
<div style="left:1526px;top:258px;width:1px;height:20px;background:#c8c8c8;"></div>
<div class="t" style="left:303.76px;top:259px;font-size:12.5px;color:#000;transform:scaleX(0.8602);">2017.05.19 12:32:30</div>
<div class="t" style="left:497.97px;top:259px;font-size:12.5px;color:#000;transform:scaleX(0.9503);">sell</div>
<div class="t" style="left:583.61px;top:259px;font-size:12.5px;color:#000;transform:scaleX(0.8602);">0.02</div>
<div class="t" style="left:681.15px;top:259px;font-size:12.5px;color:#000;transform:scaleX(0.9503);">eurusd</div>
<div class="t" style="left:789.75px;top:259px;font-size:12.5px;color:#000;transform:scaleX(0.8602);">1.11574</div>
<div class="t" style="left:902.58px;top:259px;font-size:12.5px;color:#000;transform:scaleX(0.8602);">1.11615</div>
<div class="t" style="left:1013.05px;top:259px;font-size:12.5px;color:#000;transform:scaleX(0.8602);">0.00000</div>
<div class="t" style="left:1200.88px;top:259px;font-size:12.5px;color:#000;transform:scaleX(0.8602);">2017.05.19 12:37:32</div>
<div class="t" style="left:1372.38px;top:259px;font-size:12.5px;color:#000;transform:scaleX(0.8602);">1.11605</div>
<div class="t" style="left:1502.69px;top:259px;font-size:12.5px;color:#000;transform:scaleX(0.8602);">0.00</div>
<div style="left:17px;top:260px;width:10px;height:13px;background:#fff;border:1px solid #8a8a8a;box-sizing:border-box;border-radius:2px;"></div>
<div style="left:14px;top:278px;width:1564px;height:19px;background:#e9e9e9;"></div>
<div style="left:14px;top:297px;width:1564px;height:1px;background:#cdcdcd;"></div>
<div style="left:158px;top:278px;width:1px;height:20px;background:#c8c8c8;"></div>
<div style="left:405px;top:278px;width:1px;height:20px;background:#c8c8c8;"></div>
<div style="left:517px;top:278px;width:1px;height:20px;background:#c8c8c8;"></div>
<div style="left:607px;top:278px;width:1px;height:20px;background:#c8c8c8;"></div>
<div style="left:719px;top:278px;width:1px;height:20px;background:#c8c8c8;"></div>
<div style="left:832px;top:278px;width:1px;height:20px;background:#c8c8c8;"></div>
<div style="left:943px;top:278px;width:1px;height:20px;background:#c8c8c8;"></div>
<div style="left:1055px;top:278px;width:1px;height:20px;background:#c8c8c8;"></div>
<div style="left:1302px;top:278px;width:1px;height:20px;background:#c8c8c8;"></div>
<div style="left:1414px;top:278px;width:1px;height:20px;background:#c8c8c8;"></div>
<div style="left:1526px;top:278px;width:1px;height:20px;background:#c8c8c8;"></div>
<div style="left:833px;top:278px;width:109px;height:18px;background:#ffa0a0;"></div>
<div class="t" style="left:303.85px;top:279px;font-size:12.5px;color:#000;transform:scaleX(0.8602);">2017.05.19 12:42:29</div>
<div class="t" style="left:497.97px;top:279px;font-size:12.5px;color:#000;transform:scaleX(0.9503);">sell</div>
<div class="t" style="left:583.60px;top:279px;font-size:12.5px;color:#000;transform:scaleX(0.8602);">0.01</div>
<div class="t" style="left:679.16px;top:279px;font-size:12.5px;color:#000;transform:scaleX(0.9503);">xauusd</div>
<div class="t" style="left:789.90px;top:279px;font-size:12.5px;color:#000;transform:scaleX(0.8602);">1251.98</div>
<div class="t" style="left:902.61px;top:279px;font-size:12.5px;color:#000;transform:scaleX(0.8602);">1252.96</div>
<div class="t" style="left:1030.99px;top:279px;font-size:12.5px;color:#000;transform:scaleX(0.8602);">0.00</div>
<div class="t" style="left:1200.82px;top:279px;font-size:12.5px;color:#000;transform:scaleX(0.8602);">2017.05.19 12:51:13</div>
<div class="t" style="left:1372.46px;top:279px;font-size:12.5px;color:#000;transform:scaleX(0.8602);">1253.11</div>
<div class="t" style="left:1502.69px;top:279px;font-size:12.5px;color:#000;transform:scaleX(0.8602);">0.00</div>
<div style="left:17px;top:280px;width:10px;height:13px;background:#fff;border:1px solid #8a8a8a;box-sizing:border-box;border-radius:2px;"></div>
<div style="left:14px;top:298px;width:1564px;height:15px;background:#ffffff;"></div>
<div style="left:158px;top:298px;width:1px;height:15px;background:#c8c8c8;"></div>
<div style="left:405px;top:298px;width:1px;height:15px;background:#c8c8c8;"></div>
<div style="left:517px;top:298px;width:1px;height:15px;background:#c8c8c8;"></div>
<div style="left:607px;top:298px;width:1px;height:15px;background:#c8c8c8;"></div>
<div style="left:719px;top:298px;width:1px;height:15px;background:#c8c8c8;"></div>
<div style="left:832px;top:298px;width:1px;height:15px;background:#c8c8c8;"></div>
<div style="left:943px;top:298px;width:1px;height:15px;background:#c8c8c8;"></div>
<div style="left:1055px;top:298px;width:1px;height:15px;background:#c8c8c8;"></div>
<div style="left:1302px;top:298px;width:1px;height:15px;background:#c8c8c8;"></div>
<div style="left:1414px;top:298px;width:1px;height:15px;background:#c8c8c8;"></div>
<div style="left:1526px;top:298px;width:1px;height:15px;background:#c8c8c8;"></div>
<div class="t" style="left:303.76px;top:299px;font-size:12.5px;color:#000;transform:scaleX(0.8602);">2017.05.19 13:26:40</div>
<div class="t" style="left:495.87px;top:299px;font-size:12.5px;color:#000;transform:scaleX(0.9503);">buy</div>
<div class="t" style="left:583.60px;top:299px;font-size:12.5px;color:#000;transform:scaleX(0.8602);">0.01</div>
<div class="t" style="left:679.16px;top:299px;font-size:12.5px;color:#000;transform:scaleX(0.9503);">xauusd</div>
<div class="t" style="left:789.75px;top:299px;font-size:12.5px;color:#000;transform:scaleX(0.8602);">1252.84</div>
<div class="t" style="left:902.64px;top:299px;font-size:12.5px;color:#000;transform:scaleX(0.8602);">1251.59</div>
<div class="t" style="left:1013.17px;top:299px;font-size:12.5px;color:#000;transform:scaleX(0.8602);">1258.92</div>
<div class="t" style="left:1200.82px;top:299px;font-size:12.5px;color:#000;transform:scaleX(0.8602);">2017.05.19 14:05:33</div>
<div class="t" style="left:1372.41px;top:299px;font-size:12.5px;color:#000;transform:scaleX(0.8602);">1252.36</div>
<div class="t" style="left:1502.69px;top:299px;font-size:12.5px;color:#000;transform:scaleX(0.8602);">0.00</div>
<div style="left:17px;top:300px;width:10px;height:13px;background:#fff;border:1px solid #8a8a8a;box-sizing:border-box;border-radius:2px;"></div>
<div style="left:0px;top:313px;width:1578px;height:278px;background:#fff;"></div>
<svg style="left:0;top:175px" width="135" height="180" viewBox="0 175 135 180">
<g stroke="#000" stroke-linecap="round" stroke-linejoin="round" fill="none">
<path d="M10.3 187 H106.9" stroke-width="8.8"/>
<path d="M12 207.3 H120.5" stroke-width="7.6"/>
<path d="M76 220.8 H113" stroke-width="8.6"/>
<path d="M15.7 197 V283" stroke-width="8"/>
<path d="M93.4 232 L94 314" stroke-width="9.6"/>
<path d="M28.6 300 V321.3" stroke-width="8.7"/>
<path d="M45.4 300 V340.5" stroke-width="12"/>
<path d="M58 300 V330.5" stroke-width="11.3"/>
<path d="M83.5 300 V331" stroke-width="8"/>
<path d="M68.6 300 V321" stroke-width="10"/>
<path d="M96 197 L98 201" stroke-width="11"/>
<path d="M12.5 210 V212" stroke-width="9"/>
</g>
<path d="M0 228.4 H13 V235 H0 Z" fill="#000"/>
<path d="M12 191 H96 L101 197 V211 L76 211 Q71 213.5 76 216.5 L115.5 216.5 V224.2 L88 230.5 L76 233 V239 Q82 235 89.5 242 V318 L80 322 L74 326 L40 327 L24.3 322 L22.6 300 V250 L20 250 V240 L12 235 Z" fill="#000"/>
</svg>
<svg style="left:1455px;top:200px" width="100" height="60" viewBox="1455 200 100 60"><path d="M1482.5 208.4 L1534.1 208.4 L1535.3 207.3 L1536.3 208 L1536.6 210.5 L1538.6 212.5 L1539.6 215 L1540 216.8 L1542 218.8 L1543.6 221 L1544.6 224.5 L1547.9 227.5 L1548.5 236.8 L1544.6 248.9 L1541.9 251.3 L1509.4 251.7 L1501.7 250.6 L1483 243.4 L1470.9 237.9 L1462.7 229.1 L1462.3 216.5 L1469.8 212.6 L1478.6 209.1 Z" fill="none" stroke="#000" stroke-width="1.1"/></svg>
</body></html>
